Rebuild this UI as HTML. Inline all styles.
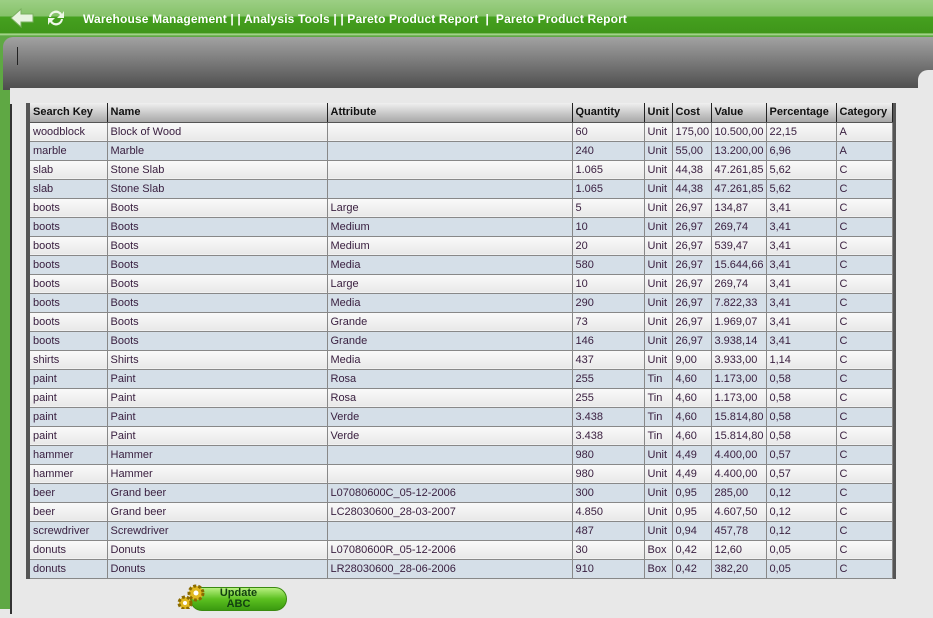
<!DOCTYPE html>
<html><head><style>
*{margin:0;padding:0;box-sizing:border-box}
html{background:#e8e8e8}
body{width:933px;height:609px;overflow:hidden;background:#5fa844;font-family:"Liberation Sans",sans-serif;position:relative}
.hdr{position:absolute;left:0;top:0;width:933px;height:36px;background:linear-gradient(#9ccf84 0,#86c26a 16px,#45a01f 17px,#3f961a 33px,#b8e0a0 34px,#5fa844 36px)}
.title{position:absolute;left:83px;top:12px;color:#fff;font-weight:bold;font-size:12px;white-space:pre;letter-spacing:0.15px}
.panel{position:absolute;left:3px;top:37px;width:930px;height:53px;border-radius:10px 0 0 0;background:linear-gradient(#a2a2a2,#4c4c4c)}
.main{position:absolute;left:10px;top:88px;width:923px;height:530px;background:#e8e8e8}
.corner{position:absolute;left:918px;top:70px;width:15px;height:20px;background:#e8e8e8;border-radius:10px 0 0 0}
.vl{position:absolute;left:10px;top:104px;width:2px;height:510px;background:#333}
.tl{position:absolute;left:17px;top:47px;width:1px;height:18px;background:#222}
.tw{position:absolute;left:26px;top:103px;width:870px;height:476px;background:#555}
table{position:absolute;left:30px;top:103px;border-collapse:collapse;font-size:11px;table-layout:fixed;width:862px}
td,th{height:19px;padding:0 3px;white-space:nowrap;overflow:hidden;border-right:1px solid #888;border-bottom:1px solid #888;color:#3a2040;text-align:left}
th{height:19px;font-weight:bold;color:#111;font-size:11px;background:linear-gradient(#f0f0f0,#a8a8a8);border-right:1px solid #222;border-bottom:1px solid #555}
tr:nth-child(even) td{background:linear-gradient(#fafafa,#e8e8e8)}
tr:nth-child(odd) td{background:#d5dfe8}
.btn{position:absolute;left:190px;top:587px;width:97px;height:24px;border-radius:12px;background:linear-gradient(#b8f080,#5cc020 50%,#3a9a10);border:1px solid #3a8a10;text-align:center;font-weight:bold;font-size:11px;color:#124010;line-height:11px}
</style></head><body>
<div class="hdr"></div>
<svg style="position:absolute;left:9px;top:7px" width="26" height="22"><path d="M2 11 L12 2 L12 7 L24 7 L24 15 L12 15 L12 20 Z" fill="#e8f4e0" stroke="#7ab060"/></svg>
<svg style="position:absolute;left:45px;top:7px" width="22" height="22"><path d="M4 10 A7 7 0 0 1 17 7 L19 4 L19 11 L12 11 L15 8 A5 5 0 0 0 6 10 Z M18 12 A7 7 0 0 1 5 15 L3 18 L3 11 L10 11 L7 14 A5 5 0 0 0 16 12 Z" fill="#eef8e8"/></svg>
<div class="title">Warehouse Management | | Analysis Tools | | Pareto Product Report  |  Pareto Product Report</div>
<div class="panel"></div>
<div class="tl"></div>
<div class="main"></div>
<div class="corner"></div>
<div class="vl"></div>
<div class="tw"></div>
<table>
<colgroup><col style="width:77px"><col style="width:220px"><col style="width:245px"><col style="width:72px"><col style="width:28px"><col style="width:39px"><col style="width:55px"><col style="width:70px"><col style="width:56px"></colgroup>
<tr><th>Search Key</th><th>Name</th><th>Attribute</th><th>Quantity</th><th>Unit</th><th>Cost</th><th>Value</th><th>Percentage</th><th>Category</th></tr>
<tr><td>woodblock</td><td>Block of Wood</td><td></td><td>60</td><td>Unit</td><td>175,00</td><td>10.500,00</td><td>22,15</td><td>A</td></tr>
<tr><td>marble</td><td>Marble</td><td></td><td>240</td><td>Unit</td><td>55,00</td><td>13.200,00</td><td>6,96</td><td>A</td></tr>
<tr><td>slab</td><td>Stone Slab</td><td></td><td>1.065</td><td>Unit</td><td>44,38</td><td>47.261,85</td><td>5,62</td><td>C</td></tr>
<tr><td>slab</td><td>Stone Slab</td><td></td><td>1.065</td><td>Unit</td><td>44,38</td><td>47.261,85</td><td>5,62</td><td>C</td></tr>
<tr><td>boots</td><td>Boots</td><td>Large</td><td>5</td><td>Unit</td><td>26,97</td><td>134,87</td><td>3,41</td><td>C</td></tr>
<tr><td>boots</td><td>Boots</td><td>Medium</td><td>10</td><td>Unit</td><td>26,97</td><td>269,74</td><td>3,41</td><td>C</td></tr>
<tr><td>boots</td><td>Boots</td><td>Medium</td><td>20</td><td>Unit</td><td>26,97</td><td>539,47</td><td>3,41</td><td>C</td></tr>
<tr><td>boots</td><td>Boots</td><td>Media</td><td>580</td><td>Unit</td><td>26,97</td><td>15.644,66</td><td>3,41</td><td>C</td></tr>
<tr><td>boots</td><td>Boots</td><td>Large</td><td>10</td><td>Unit</td><td>26,97</td><td>269,74</td><td>3,41</td><td>C</td></tr>
<tr><td>boots</td><td>Boots</td><td>Media</td><td>290</td><td>Unit</td><td>26,97</td><td>7.822,33</td><td>3,41</td><td>C</td></tr>
<tr><td>boots</td><td>Boots</td><td>Grande</td><td>73</td><td>Unit</td><td>26,97</td><td>1.969,07</td><td>3,41</td><td>C</td></tr>
<tr><td>boots</td><td>Boots</td><td>Grande</td><td>146</td><td>Unit</td><td>26,97</td><td>3.938,14</td><td>3,41</td><td>C</td></tr>
<tr><td>shirts</td><td>Shirts</td><td>Media</td><td>437</td><td>Unit</td><td>9,00</td><td>3.933,00</td><td>1,14</td><td>C</td></tr>
<tr><td>paint</td><td>Paint</td><td>Rosa</td><td>255</td><td>Tin</td><td>4,60</td><td>1.173,00</td><td>0,58</td><td>C</td></tr>
<tr><td>paint</td><td>Paint</td><td>Rosa</td><td>255</td><td>Tin</td><td>4,60</td><td>1.173,00</td><td>0,58</td><td>C</td></tr>
<tr><td>paint</td><td>Paint</td><td>Verde</td><td>3.438</td><td>Tin</td><td>4,60</td><td>15.814,80</td><td>0,58</td><td>C</td></tr>
<tr><td>paint</td><td>Paint</td><td>Verde</td><td>3.438</td><td>Tin</td><td>4,60</td><td>15.814,80</td><td>0,58</td><td>C</td></tr>
<tr><td>hammer</td><td>Hammer</td><td></td><td>980</td><td>Unit</td><td>4,49</td><td>4.400,00</td><td>0,57</td><td>C</td></tr>
<tr><td>hammer</td><td>Hammer</td><td></td><td>980</td><td>Unit</td><td>4,49</td><td>4.400,00</td><td>0,57</td><td>C</td></tr>
<tr><td>beer</td><td>Grand beer</td><td>L07080600C_05-12-2006</td><td>300</td><td>Unit</td><td>0,95</td><td>285,00</td><td>0,12</td><td>C</td></tr>
<tr><td>beer</td><td>Grand beer</td><td>LC28030600_28-03-2007</td><td>4.850</td><td>Unit</td><td>0,95</td><td>4.607,50</td><td>0,12</td><td>C</td></tr>
<tr><td>screwdriver</td><td>Screwdriver</td><td></td><td>487</td><td>Unit</td><td>0,94</td><td>457,78</td><td>0,12</td><td>C</td></tr>
<tr><td>donuts</td><td>Donuts</td><td>L07080600R_05-12-2006</td><td>30</td><td>Box</td><td>0,42</td><td>12,60</td><td>0,05</td><td>C</td></tr>
<tr><td>donuts</td><td>Donuts</td><td>LR28030600_28-06-2006</td><td>910</td><td>Box</td><td>0,42</td><td>382,20</td><td>0,05</td><td>C</td></tr>
</table>
<div class="btn">Update<br>ABC</div>
<svg style="position:absolute;left:176px;top:584px" width="30" height="25"><circle cx="20" cy="9" r="7" fill="#e0b820" stroke="#8a6a00" stroke-dasharray="3 2" stroke-width="3"/><circle cx="20" cy="9" r="2.5" fill="#fff"/><circle cx="9" cy="19" r="6" fill="#e0b820" stroke="#8a6a00" stroke-dasharray="3 2" stroke-width="3"/><circle cx="9" cy="19" r="2" fill="#fff"/></svg>
</body></html>
